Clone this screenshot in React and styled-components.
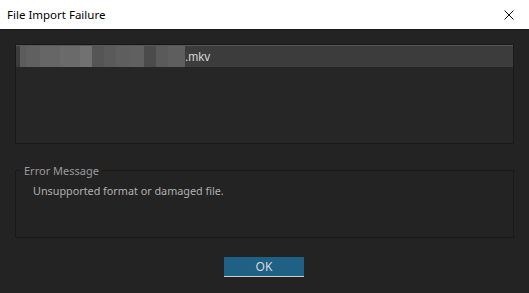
import React from "react";
import styled, { createGlobalStyle } from "styled-components";

const Global = createGlobalStyle`
  html, body { margin: 0; padding: 0; background: #232323; }
  body { width: 529px; height: 293px; overflow: hidden; font-family: "Noto Sans", "Open Sans", sans-serif; }
`;

const Window = styled.div`
  width: 529px;
  height: 293px;
  display: flex;
  flex-direction: column;
  background: #232323;
`;

const TitleBar = styled.div`
  height: 29px;
  background: #ffffff;
  display: flex;
  align-items: center;
  justify-content: space-between;
  padding: 0 15px 0 7px;
  box-sizing: border-box;
`;

const Title = styled.span`
  font-size: 11.5px;
  color: #000;
  margin-top: -1px;
`;

const Body = styled.div`
  flex: 1;
  display: flex;
  flex-direction: column;
  padding: 14px 15px 0 15px;
  border-top: 1px solid #1a1a1a;
`;

const ListBox = styled.div`
  height: 98px;
  border: 1px solid #191919;
  background: #262626;
  display: flex;
  flex-direction: column;
`;

const Row = styled.div`
  height: 21px;
  background: #3c3c3c;
  border-top: 1px solid #575757;
  display: flex;
  align-items: center;
  padding-left: 4px;
`;

const Blur = styled.div`
  display: flex;
  height: 21px;
`;

const Block = styled.div`
  width: ${(p) => p.w}px;
  background: ${(p) => p.c};
`;

const FileExt = styled.span`
  font-family: "Liberation Sans", Arial, sans-serif;
  font-size: 12px;
  color: #d4d4d4;
`;

const Group = styled.fieldset`
  margin: 19px 0 0 0;
  padding: 0 0 0 14px;
  height: 75px;
  border: 1px solid #191919;
  box-sizing: border-box;
`;

const Legend = styled.legend`
  font-size: 11px;
  color: #9a9a9a;
  padding: 0 3px;
  margin-left: -9px;
`;

const Message = styled.div`
  font-size: 10.8px;
  color: #b0b0b0;
  margin-top: 5px;
  margin-left: 3px;
`;

const Footer = styled.div`
  display: flex;
  justify-content: center;
  padding-top: 19px;
  padding-right: 1px;
`;

const OkButton = styled.button`
  width: 80px;
  height: 20px;
  background: #1e6185;
  border: none;
  border-bottom: 1px solid #d0d0d0;
  color: #d8d8d8;
  font-family: "Noto Sans", "Open Sans", sans-serif;
  font-size: 12px;
  padding: 0;
`;

const blocks = [
  ["#5c5c5c", 6], ["#606060", 14], ["#666666", 20], ["#6a6a6a", 20], ["#717171", 12],
  ["#555555", 12], ["#5a5a5a", 12], ["#5e5e5e", 14], ["#606060", 14], ["#4b4b4b", 12],
  ["#5a5a5a", 12], ["#5e5e5e", 17],
];

export default function App() {
  return (
    <>
      <Global />
      <Window>
        <TitleBar>
          <Title>File Import Failure</Title>
          <svg width="10" height="10" viewBox="0 0 10 10">
            <path d="M0.5 0.5 L9.5 9.5 M9.5 0.5 L0.5 9.5" stroke="#111" strokeWidth="1" />
          </svg>
        </TitleBar>
        <Body>
          <ListBox>
            <Row>
              <Blur>
                {blocks.map(([c, w], i) => (
                  <Block key={i} c={c} w={w} />
                ))}
              </Blur>
              <FileExt>.mkv</FileExt>
            </Row>
          </ListBox>
          <Group>
            <Legend>Error Message</Legend>
            <Message>Unsupported format or damaged file.</Message>
          </Group>
          <Footer>
            <OkButton>OK</OkButton>
          </Footer>
        </Body>
      </Window>
    </>
  );
}
